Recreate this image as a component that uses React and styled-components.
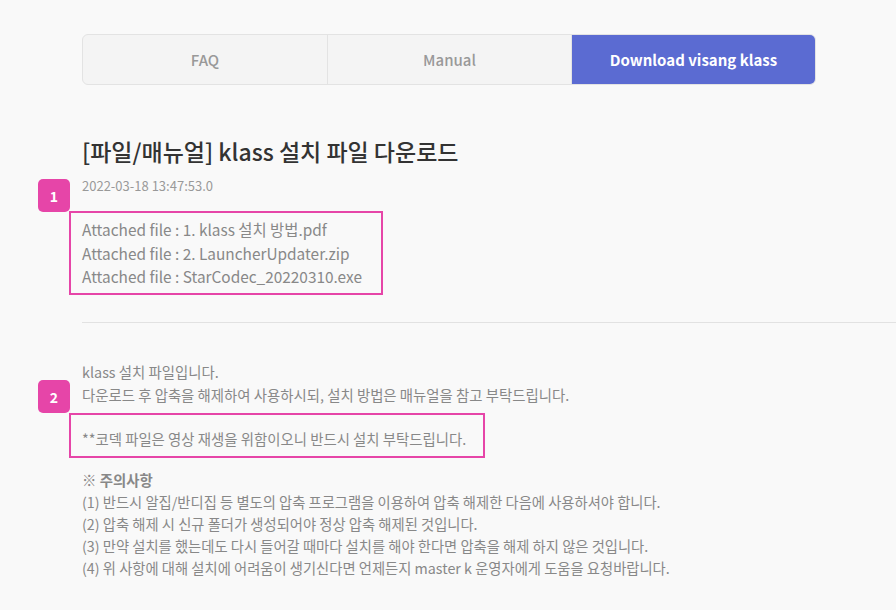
import React from "react";
import styled, { createGlobalStyle } from "styled-components";

const GlobalStyle = createGlobalStyle`
  html, body {
    margin: 0;
    padding: 0;
    background: #f9f9f9;
    font-family: "Noto Sans CJK KR", "Noto Sans", sans-serif;
  }
`;

const tabs = ["FAQ", "Manual", "Download visang klass"];

const files = [
  "1. klass 설치 방법.pdf",
  "2. LauncherUpdater.zip",
  "StarCodec_20220310.exe",
];

const notes = [
  "(1) 반드시 알집/반디집 등 별도의 압축 프로그램을 이용하여 압축 해제한 다음에 사용하셔야 합니다.",
  "(2) 압축 해제 시 신규 폴더가 생성되어야 정상 압축 해제된 것입니다.",
  "(3) 만약 설치를 했는데도 다시 들어갈 때마다 설치를 해야 한다면 압축을 해제 하지 않은 것입니다.",
  "(4) 위 사항에 대해 설치에 어려움이 생기신다면 언제든지 master k 운영자에게 도움을 요청바랍니다.",
];

const App = () => {
  return (
    <>
      <GlobalStyle />
      <Page>
        <TabBar>
          {tabs.map((t, i) => (
            <Tab key={t} active={i === 2}>
              {t}
            </Tab>
          ))}
        </TabBar>

        <Title>[파일/매뉴얼] klass 설치 파일 다운로드</Title>
        <DateText>2022-03-18 13:47:53.0</DateText>

        <Marked>
          <Badge top={-32}>1</Badge>
          <FileBox>
            {files.map((f) => (
              <FileLine key={f}>Attached file : {f}</FileLine>
            ))}
          </FileBox>
        </Marked>

        <Divider />

        <Body>
          <Para>klass 설치 파일입니다.</Para>
          <Marked>
            <Badge top={-3}>2</Badge>
            <Para>다운로드 후 압축을 해제하여 사용하시되, 설치 방법은 매뉴얼을 참고 부탁드립니다.</Para>
          </Marked>
          <CodecBox>
            <Para>**코덱 파일은 영상 재생을 위함이오니 반드시 설치 부탁드립니다.</Para>
          </CodecBox>

          <NoteTitle>※ 주의사항</NoteTitle>
          {notes.map((n) => (
            <NoteLine key={n}>{n}</NoteLine>
          ))}
        </Body>
      </Page>
    </>
  );
};

const Page = styled.div`
  padding: 34px 0 0 82px;
  min-height: 610px;
  box-sizing: border-box;
  overflow: hidden;
`;

const TabBar = styled.div`
  display: grid;
  grid-template-columns: 1fr 1fr 1fr;
  width: 734px;
  height: 51px;
  border: 1px solid #e3e3e3;
  border-radius: 6px;
  box-sizing: border-box;
  background: #f4f4f4;
  overflow: hidden;
`;

const Tab = styled.div`
  display: flex;
  align-items: center;
  justify-content: center;
  font-size: 15px;
  font-weight: ${(p) => (p.active ? 700 : 500)};
  color: ${(p) => (p.active ? "#ffffff" : "#999999")};
  background: ${(p) => (p.active ? "#5b6bd2" : "transparent")};
  & + & {
    border-left: 1px solid #e3e3e3;
  }
`;

const Title = styled.h1`
  margin: 50px 0 0;
  font-size: 23px;
  font-weight: 500;
  color: #333;
  line-height: 32px;
`;

const DateText = styled.div`
  margin-top: 10px;
  font-size: 13px;
  color: #999;
  line-height: 18px;
`;

const Marked = styled.div`
  position: relative;
`;

const Badge = styled.div`
  position: absolute;
  left: -44px;
  top: ${(p) => p.top}px;
  width: 32px;
  height: 33px;
  border-radius: 5px;
  background: #e645a8;
  color: #fff;
  font-size: 14px;
  font-weight: 700;
  display: flex;
  align-items: center;
  justify-content: center;
`;

const FileBox = styled.div`
  margin: 16px 0 0 -13px;
  width: 314px;
  height: 84px;
  box-sizing: border-box;
  border: 2px solid #e645a8;
  padding: 5px 0 0 11px;
`;

const FileLine = styled.div`
  font-size: 15.4px;
  color: #888;
  line-height: 23.5px;
  white-space: nowrap;
`;

const Divider = styled.div`
  margin-top: 27px;
  height: 1px;
  background: #e2e2e2;
`;

const Body = styled.div`
  margin-top: 37px;
`;

const Para = styled.div`
  font-size: 14.4px;
  color: #888;
  line-height: 23px;
  white-space: nowrap;
`;

const CodecBox = styled.div`
  margin: 7px 0 0 -13px;
  width: 416px;
  height: 45px;
  box-sizing: border-box;
  border: 2px solid #e645a8;
  padding: 12px 0 0 11px;
`;

const NoteTitle = styled.div`
  margin-top: 11px;
  font-size: 14.4px;
  font-weight: 700;
  color: #888;
  line-height: 22px;
`;

const NoteLine = styled.div`
  font-size: 14.3px;
  color: #888;
  line-height: 22px;
  white-space: nowrap;
`;

export default App;
